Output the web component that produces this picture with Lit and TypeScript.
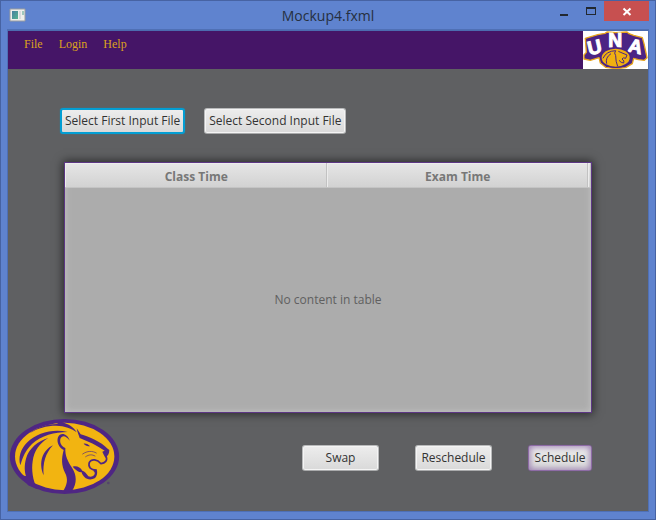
import { LitElement, html, css } from "lit";
import { customElement } from "lit/decorators.js";

@customElement("una-wordmark")
class UnaWordmark extends LitElement {
  static styles = css`
    :host { display: block; flex: none; line-height: 0; }
    .mark { width: 65px; height: 38px; background: #fff; }
    .letter {
      font: bold 58px "Liberation Sans", Arial, sans-serif;
      fill: #fff; stroke: #fff; stroke-width: 3px;
    }
  `;
  render() {
    return html`<svg class="mark" viewBox="0 0 195 114" role="img" aria-label="UNA">
      <path d="M7 22 L44 11 L66 7 L72 3 L98 5 L132 3 L138 8 L152 13 L178 20 L183 38 L192 80 L184 88 L166 86 L152 82 L148 98 L128 110 L98 113 L68 109 L52 96 L48 80 L22 88 L3 84 L3 72 L10 64 Z"
        fill="#4c2484" stroke="#e8a51c" stroke-width="4" stroke-linejoin="round"/>
      <g class="letter">
        <text transform="translate(19 73) rotate(-13)">U</text>
        <text transform="translate(76 49)">N</text>
        <text transform="translate(133 61) rotate(13)">A</text>
      </g>
      <ellipse cx="98" cy="80" rx="46" ry="31" fill="#4c2484"/>
      <ellipse cx="98" cy="80" rx="42" ry="27" fill="#f0b010"/>
      <g fill="none" stroke="#4c2484" stroke-width="3">
        <path d="M60 82 Q70 60 98 59"/>
        <path d="M71 98 Q66 80 84 68"/>
        <path d="M98 59 Q92 66 98 74 Q98 92 104 106"/>
        <path d="M106 61 L132 72 L128 82 Q120 78 117 84 Q126 90 122 96 Q114 96 108 88"/>
      </g>
    </svg>`;
  }
}

@customElement("lion-logo")
class LionLogo extends LitElement {
  static styles = css`
    :host { display: block; flex: none; line-height: 0; }
    .lion { width: 111px; height: 77px; }
  `;
  render() {
    return html`<svg class="lion" viewBox="27 24 333 231" role="img" aria-label="Lion">
      <ellipse cx="193.500" cy="139.500" rx="164" ry="112.500" fill="#4f2683"/>
      <ellipse cx="194" cy="139.500" rx="149" ry="101" fill="#f2b411"/>
      <g fill="#4f2683">
        <path d="M180 36 C205 40 222 52 230 67 C216 55 194 48 168 47 C140 47 112 55 88 70 C112 52 140 42 170 42Z"/>
        <path d="M203 66 C160 55 110 69 82 97 C62 117 54 142 61 166 C68 142 76 121 96 102 C124 76 164 66 203 66Z"/>
        <path d="M145 84 C115 92 86 116 78 146 C72 168 74 186 78 198 L62 196 L84 226 L112 238 C98 212 94 178 98 154 C102 122 118 100 145 84Z"/>
        <path d="M159 106 C128 120 114 158 131 196 C128 160 136 130 159 106Z"/>
        <path d="M209 92 C202 70 181 66 174 82 C169 96 177 114 191 120 C184 146 184 166 195 188 C205 207 202 224 188 245 L216 243 C232 219 230 195 216 173 C203 153 195 138 196 114 C183 108 179 98 181 87 C186 74 198 76 209 92Z"/>
        <path d="M230 55 L242 73 C267 79 303 96 323 116 L328 120 C328 132 323 138 316 143 C312 135 309 130 307 125 L314 122 C291 106 264 94 239 84 C237 76 232 69 230 55Z"/>
        <path d="M251 101 C259 100 266 104 270 109 C262 109 256 107 251 101Z"/>
        <path d="M218 170 C229 166 241 171 247 182 C254 184 260 191 265 199 C273 202 281 199 284 192 C285 187 283 184 278 182 L289 178 C294 186 291 200 284 205 C274 210 261 209 254 202 C249 197 246 193 245 187 C237 188 227 180 218 170Z"/>
      </g>
      <g fill="none" stroke="#4f2683" stroke-linecap="round">
        <path d="M318 139 C324 151 315 160 303 161 C292 148 275 145 268 157 C263 173 274 179 288 180" stroke-width="5"/>
        <path d="M248 132 C262 122 277 122 289 129" stroke-width="2"/>
        <path d="M257 140 C268 133 276 133 285 138" stroke-width="2"/>
      </g>
      <circle cx="325" cy="219" r="4" fill="#54456b"/>
    </svg>`;
  }
}

@customElement("app-root")
class AppRoot extends LitElement {
  static styles = css`
    :host {
      display: block;
      font: 12px/16px "Open Sans", "Noto Sans", sans-serif;
      color: #333;
    }
    * { box-sizing: border-box; }
    .window {
      min-height: 100vh;
      display: flex;
      flex-direction: column;
      padding: 0 7px 8px;
      border: 1px solid #4763a3;
      background: #5f83cf;
    }
    .titlebar {
      display: grid;
      grid-template-columns: 1fr auto 1fr;
      height: 29px;
      flex: none;
    }
    .app-icon { margin: 7px 0 0 1px; }
    .title {
      margin: 0;
      font-size: 14px;
      line-height: 30px;
      font-weight: 400;
      color: #26303f;
    }
    .controls { display: flex; justify-content: flex-end; align-items: flex-start; margin-right: -1px; }
    .control { width: 27px; height: 20px; padding: 0; border: 0; background: none; line-height: 0; }
    .close { width: 45px; background: #c75050; }
    .client {
      flex: 1;
      display: flex;
      flex-direction: column;
      border-top: 1px solid #4c6cb0;
      background: #5f6062;
      box-shadow: 0 0 0 1px #4f70b5;
    }
    .menubar {
      display: flex;
      justify-content: space-between;
      background: #451567;
    }
    .menus { display: flex; gap: 16px; padding: 5px 16px; }
    .menu {
      height: 16px;
      padding: 0;
      border: 0;
      background: none;
      font: 12px/16px "Liberation Serif", "Times New Roman", serif;
      color: #dca21c;
    }
    .files { display: flex; gap: 19px; padding: 39px 52px 28px; }
    .btn {
      height: 26px;
      padding: 0 4px;
      border: 1px solid #b9babb;
      border-bottom-color: #a9aaab;
      border-radius: 3px;
      background: linear-gradient(#ededed, #d9d9d9);
      box-shadow: inset 0 0 0 1px #f4f4f4;
      font: 12px/16px "Open Sans", "Noto Sans", sans-serif;
      color: #333;
      white-space: nowrap;
    }
    .files .focused { border: 2px solid #039ed3; padding: 0 3px; box-shadow: 0 0 1px #039ed3; }
    .wide { width: 77px; padding: 0; }
    .glow {
      width: 64px;
      padding: 0;
      border-color: #8d6ba5;
      box-shadow: inset 0 0 6px 1px #9a7cb0, 0 0 1px #7c549a;
    }
    .table-area { flex: 1; display: grid; padding: 0 56px; }
    .grid {
      width: 100%;
      height: 100%;
      min-height: 160px;
      border: 1px solid #5c3684;
      border-spacing: 0;
      table-layout: fixed;
      background: #acacac;
      box-shadow: 0 0 9px 1px rgba(0, 0, 0, 0.6), inset 0 0 7px #c4c4c4;
    }
    .grid th {
      height: 25px;
      padding: 3px 0 0 2px;
      border-right: 1px solid #c2c2c2;
      border-bottom: 1px solid #c4c4c4;
      background: linear-gradient(#e6e6e6, #d2d2d2);
      box-shadow: inset 1px 1px #ececec;
      color: #777;
    }
    .filler { width: 3px; }
    .empty { padding: 0; text-align: center; color: #606060; }
    .footer { display: flex; justify-content: space-between; padding: 5px 56px 16px 1px; }
    .actions { display: flex; gap: 36px; padding-top: 27px; }
  `;

  render() {
    return html`<div class="window">
      <header class="titlebar">
        <svg class="app-icon" width="17" height="14" viewBox="0 0 17 14" aria-hidden="true">
          <defs><linearGradient id="pane" x2="1" y2="1"><stop stop-color="#477fa2"/><stop offset="1" stop-color="#55b391"/></linearGradient></defs>
          <path d="M1 1H16V13H1Z" fill="#eeeeec" stroke="#9a9d9f"/>
          <path d="M3 3H9V11H3Z" fill="url(#pane)"/>
          <path d="M10 3H12V11H10Z" fill="#d8dadd"/>
          <path d="M13 3H15V7H13Z" fill="#9fc7bd"/>
        </svg>
        <h1 class="title">Mockup4.fxml</h1>
        <div class="controls">
          <button class="control" aria-label="Minimize"><svg width="27" height="20"><path d="M10 13H18V15H10Z" fill="#222830"/></svg></button>
          <button class="control" aria-label="Maximize"><svg width="27" height="20"><path d="M9 6H19V14H9ZM10 8V13H18V8Z" fill="#222830" fill-rule="evenodd"/></svg></button>
          <button class="control close" aria-label="Close"><svg width="45" height="20"><path d="M19.500 7.500L26.500 14M26.500 7.500L19.500 14" stroke="#fff" stroke-width="2"/></svg></button>
        </div>
      </header>
      <main class="client">
        <nav class="menubar">
          <div class="menus">
            ${["File", "Login", "Help"].map((m) => html`<button class="menu">${m}</button>`)}
          </div>
          <una-wordmark></una-wordmark>
        </nav>
        <div class="files">
          <button class="btn focused">Select First Input File</button>
          <button class="btn">Select Second Input File</button>
        </div>
        <div class="table-area">
          <table class="grid">
            <colgroup><col /><col /><col class="filler" /></colgroup>
            <thead><tr><th scope="col">Class Time</th><th scope="col">Exam Time</th><th></th></tr></thead>
            <tbody><tr><td class="empty" colspan="3">No content in table</td></tr></tbody>
          </table>
        </div>
        <footer class="footer">
          <lion-logo></lion-logo>
          <div class="actions">
            <button class="btn wide">Swap</button>
            <button class="btn wide">Reschedule</button>
            <button class="btn glow">Schedule</button>
          </div>
        </footer>
      </main>
    </div>`;
  }
}
